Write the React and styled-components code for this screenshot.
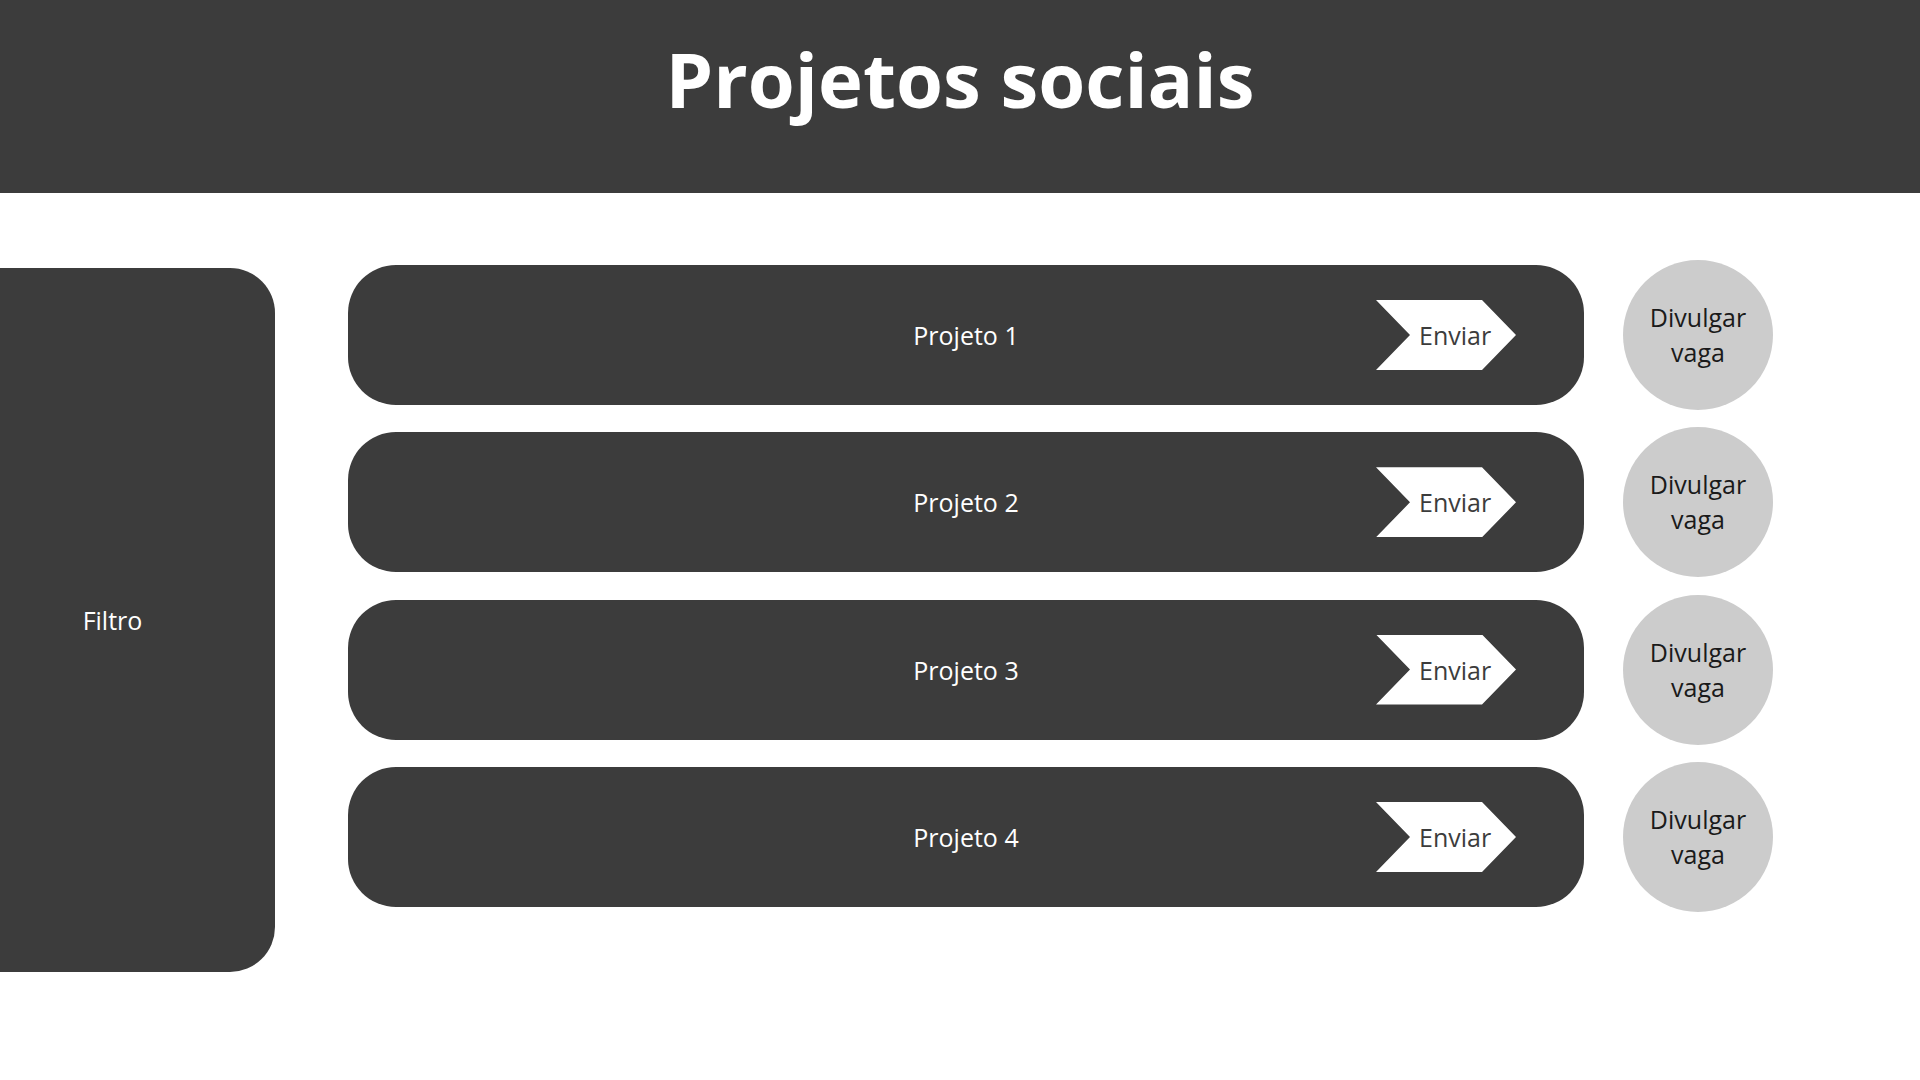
import React from "react";
import styled, { createGlobalStyle } from "styled-components";

const Global = createGlobalStyle`
  html, body { margin: 0; padding: 0; background: #ffffff; }
  body { font-family: "Open Sans", "Noto Sans", sans-serif; overflow: hidden; }
  * { box-sizing: border-box; }
`;

const Page = styled.div`
  width: 1920px;
  height: 1080px;
  background: #ffffff;
  overflow: hidden;
`;

const Header = styled.header`
  height: 193px;
  background: #3c3c3c;
  padding-top: 27px;
  text-align: center;
`;

const Title = styled.h1`
  margin: 0;
  font-size: 76px;
  font-weight: 700;
  line-height: normal;
  color: #ffffff;
`;

const Main = styled.main`
  display: flex;
  align-items: flex-start;
  padding-top: 67px;
`;

const FilterPanel = styled.aside`
  margin-top: 8px;
  margin-left: -50px;
  width: 325px;
  height: 704px;
  background: #3c3c3c;
  border-radius: 0 45px 45px 0;
  display: flex;
  align-items: center;
  justify-content: center;
  color: #ffffff;
  font-size: 25px;
`;

const List = styled.div`
  margin-left: 73px;
  display: flex;
  flex-direction: column;
  gap: 17.3px;
`;

const Row = styled.div`
  display: flex;
  align-items: center;
  gap: 39px;
`;

const Bar = styled.div`
  width: 1236px;
  height: 140px;
  background: #3c3c3c;
  border-radius: 48px;
  display: grid;
  grid-template-columns: 1fr auto 1fr;
  align-items: center;
  padding: 0 68px;
`;

const BarLabel = styled.span`
  grid-column: 2;
  color: #ffffff;
  font-size: 25px;
`;

const SendButton = styled.button`
  grid-column: 3;
  justify-self: end;
  width: 140px;
  height: 70px;
  border: none;
  background: #ffffff;
  clip-path: polygon(0 0, 106px 0, 140px 35px, 106px 70px, 0 70px, 34px 35px);
  padding: 0 0 0 43px;
  text-align: left;
  font-family: "Open Sans", "Noto Sans", sans-serif;
  font-size: 25px;
  color: #3c3c3c;
  cursor: pointer;
`;

const Circle = styled.button`
  width: 150px;
  height: 150px;
  border-radius: 50%;
  border: none;
  background: #cccccc;
  color: #1a1a1a;
  font-family: "Open Sans", "Noto Sans", sans-serif;
  font-size: 25px;
  line-height: 35px;
  padding: 0;
  cursor: pointer;
`;

const projects = ["Projeto 1", "Projeto 2", "Projeto 3", "Projeto 4"];

export default function App() {
  return (
    <Page>
      <Global />
      <Header>
        <Title>Projetos sociais</Title>
      </Header>
      <Main>
        <FilterPanel>Filtro</FilterPanel>
        <List>
          {projects.map((p) => (
            <Row key={p}>
              <Bar>
                <BarLabel>{p}</BarLabel>
                <SendButton>Enviar</SendButton>
              </Bar>
              <Circle>
                Divulgar
                <br />
                vaga
              </Circle>
            </Row>
          ))}
        </List>
      </Main>
    </Page>
  );
}
